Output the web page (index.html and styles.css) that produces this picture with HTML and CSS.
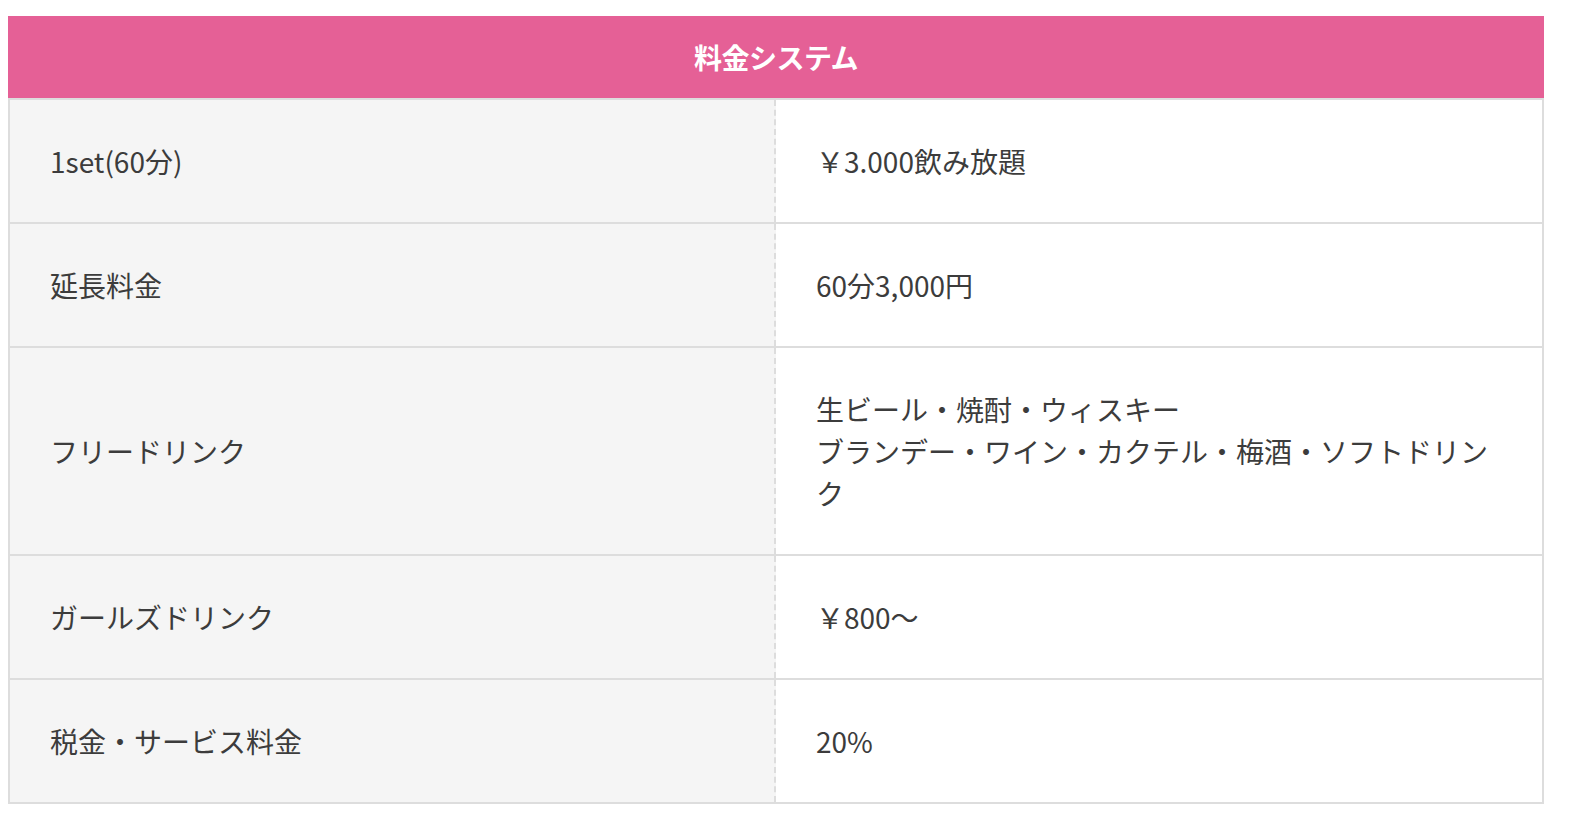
FILE: index.html
```html
<!DOCTYPE html>
<html lang="ja">
<head>
<meta charset="utf-8">
<title>料金システム</title>
<link rel="stylesheet" href="styles.css">
</head>
<body>
<div class="wrap">
  <div class="price">
    <div class="price-head">料金システム</div>
    <div class="price-body">
      <div class="row">
        <div class="cell label">1set(60分)</div>
        <div class="cell value">￥3.000飲み放題</div>
      </div>
      <div class="row">
        <div class="cell label">延長料金</div>
        <div class="cell value">60分3,000円</div>
      </div>
      <div class="row">
        <div class="cell label">フリードリンク</div>
        <div class="cell value">生ビール・焼酎・ウィスキー<br>ブランデー・ワイン・カクテル・梅酒・ソフトドリンク</div>
      </div>
      <div class="row">
        <div class="cell label">ガールズドリンク</div>
        <div class="cell value">￥800～</div>
      </div>
      <div class="row">
        <div class="cell label">税金・サービス料金</div>
        <div class="cell value">20%</div>
      </div>
    </div>
  </div>
</div>
</body>
</html>
```

FILE: styles.css
```css
html, body {
  margin: 0;
  padding: 0;
  background: #ffffff;
}

body {
  font-family: "Noto Sans CJK JP", "Noto Sans", sans-serif;
  color: #3c3c3c;
}

.wrap {
  padding: 16px 0 0 8px;
}

.price {
  width: 1536px;
}

.price-head {
  height: 82px;
  display: flex;
  align-items: center;
  justify-content: center;
  background: #e56096;
  color: #ffffff;
  font-weight: 700;
  font-size: 28px;
  letter-spacing: -0.5px;
}

.price-body {
  border: 2px solid #dddddd;
}

.row {
  display: grid;
  grid-template-columns: 766px 766px;
  border-top: 2px solid #dddddd;
}

.row:first-child {
  border-top: none;
}

.cell {
  padding: 40px 40px;
  font-size: 28px;
  line-height: 42px;
  display: flex;
  align-items: center;
  min-height: 42px;
}

.value {
  display: block;
  align-self: center;
}

.label {
  background: #f5f5f5;
  border-right: 2px dashed #dddddd;
}

.value {
  background: #ffffff;
}
```
